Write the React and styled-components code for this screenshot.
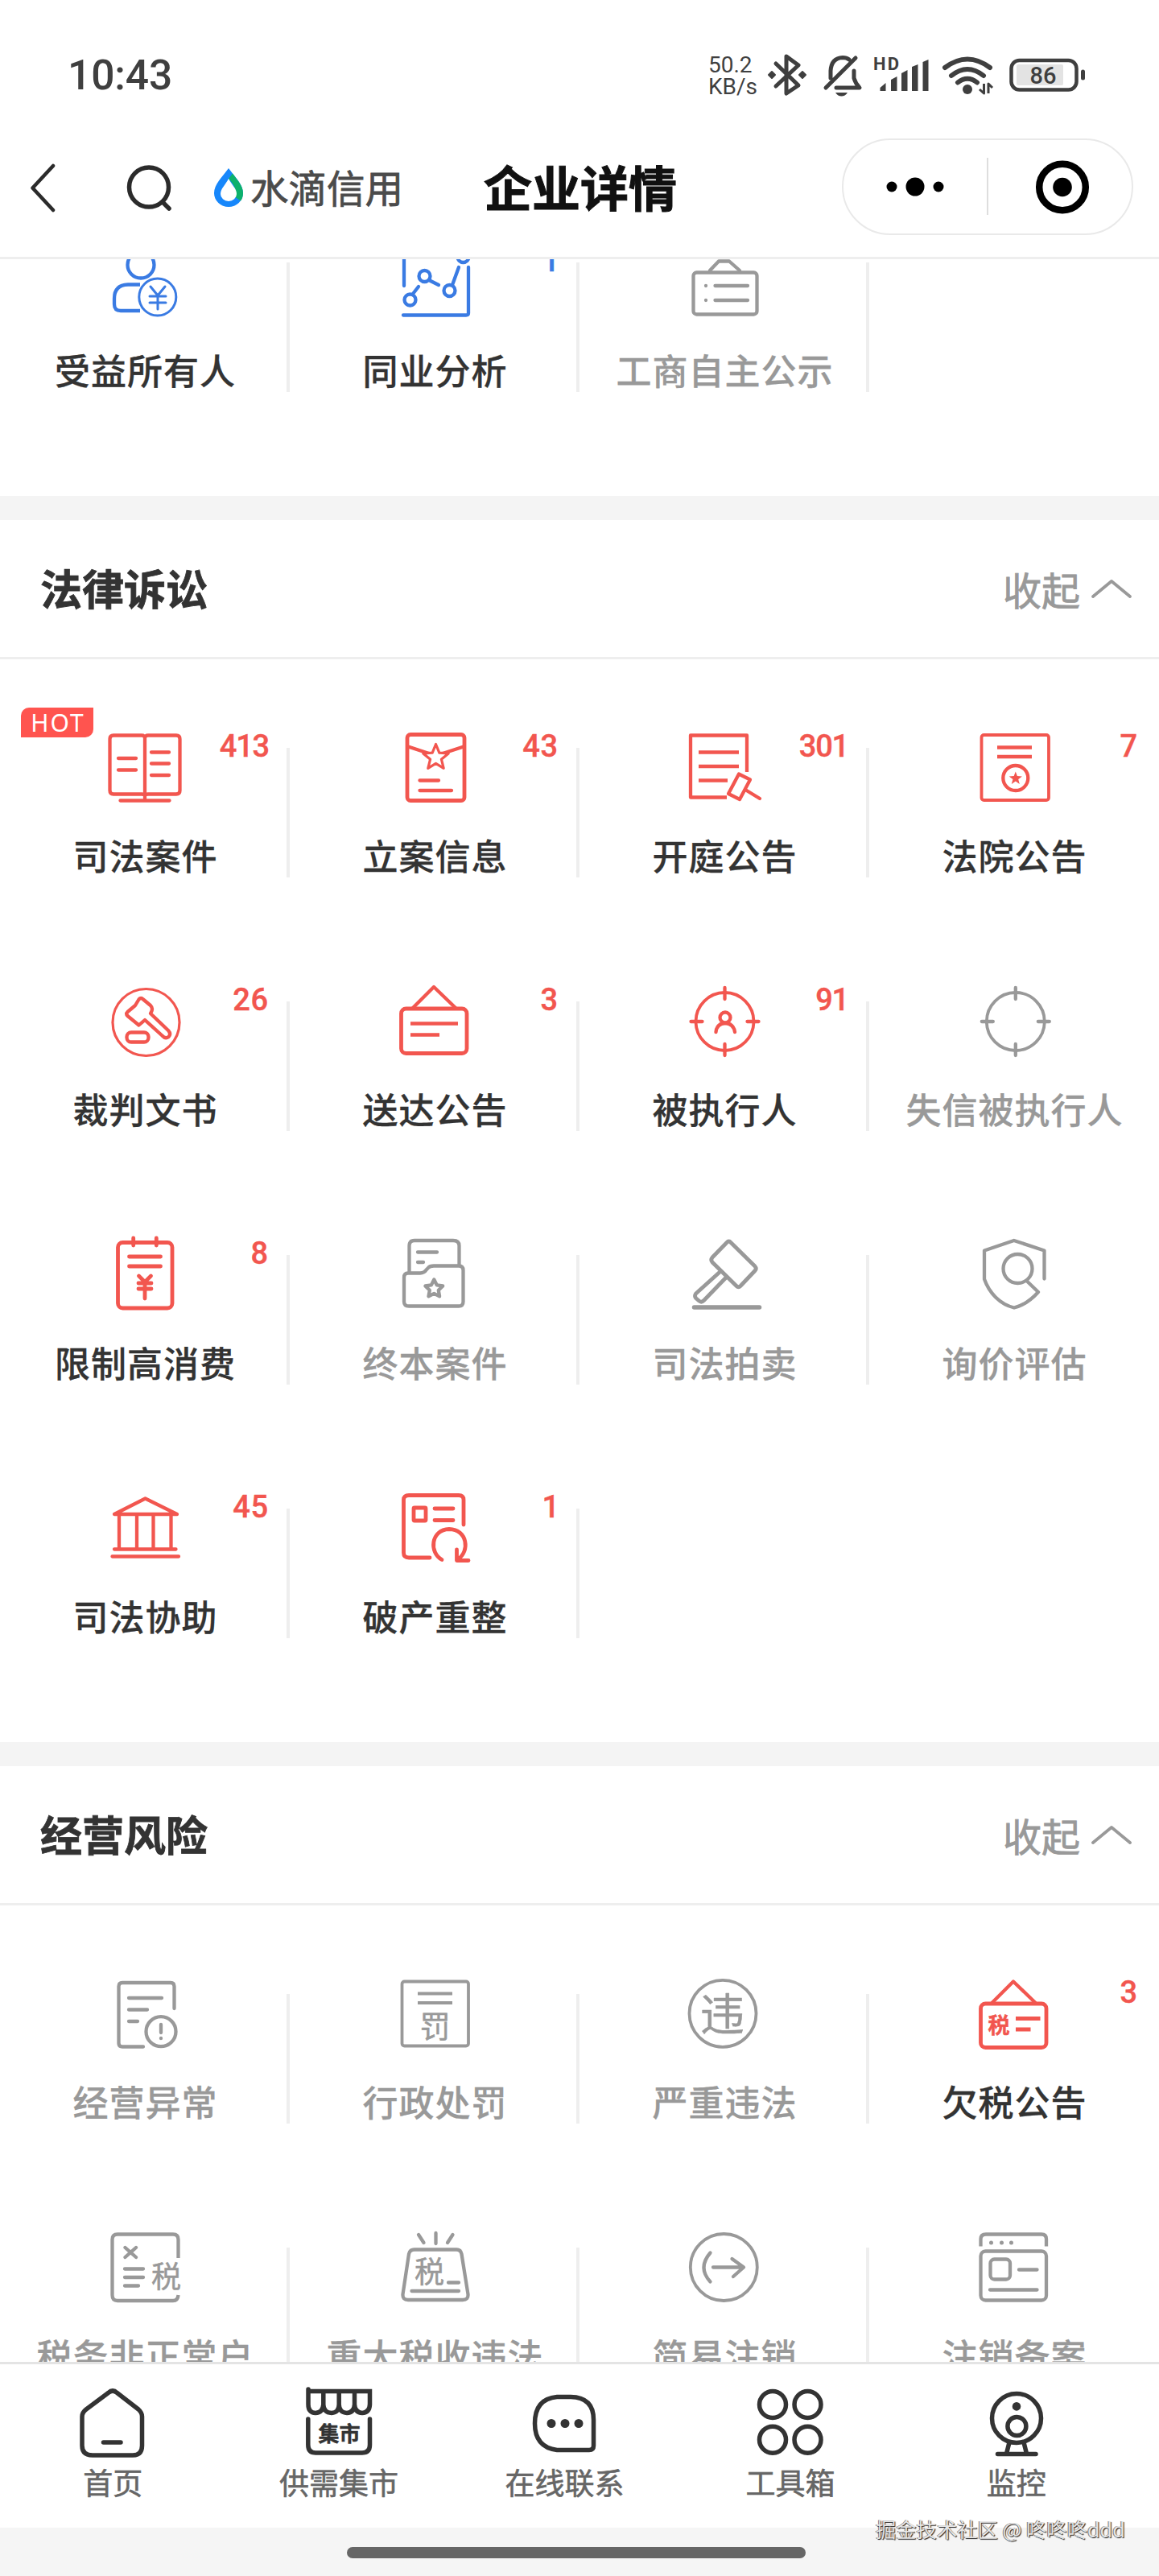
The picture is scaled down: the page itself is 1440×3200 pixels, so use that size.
import React from "react";
import styled, { createGlobalStyle } from "styled-components";

const RED = "#f2564f";
const BLUE = "#3a7be3";
const GREY = "#999999";
const INK = "#333333";
const CJK = `"Noto Sans CJK SC", sans-serif`;

const GlobalStyle = createGlobalStyle`
  * { box-sizing: border-box; }
  body { margin: 0; background: #fff; }
`;

const Page = styled.div`
  width: 1440px;
  height: 3200px;
  display: flex;
  flex-direction: column;
  background: #fff;
  color: ${INK};
  font-family: Roboto, ${CJK};
  overflow: hidden;
  position: relative;
`;

/* status bar */
const StatusBar = styled.div`
  height: 144px;
  flex: none;
  padding: 42px 90px 0 84px;
  display: flex;
  align-items: center;
  justify-content: space-between;
  color: #3f3f3f;
`;
const Clock = styled.div`
  padding-top: 1px;
  font-size: 51.5px;
  line-height: 60px;
  font-weight: 500;
  letter-spacing: -0.1px;
`;
const StatusIcons = styled.div`
  display: grid;
  grid-template-columns: 70px 68px 66px 84px 84px 98px;
  align-items: center;
`;
const Speed = styled.div`
  padding-top: 2px;
  font-size: 28px;
  line-height: 27px;
  white-space: nowrap;
`;
const Glyph = styled.svg`
  display: block;
  width: ${(p) => p.$w}px;
  height: ${(p) => p.$h}px;
  fill: none;
  stroke: currentColor;
  stroke-width: ${(p) => p.$stroke || 4.3};
  stroke-linecap: round;
  stroke-linejoin: round;
  overflow: visible;
`;

/* navigation bar */
const NavBar = styled.header`
  height: 178px;
  flex: none;
  border-bottom: 3px solid #eeeeee;
  display: grid;
  grid-template-columns: 140px 118px 325px 1fr 394px;
  align-items: center;
`;
const NavSlot = styled.div`
  padding-left: ${(p) => p.$left}px;
  padding-top: 2px;
  color: #2b2b2b;
`;
const Brand = styled.div`
  display: flex;
  align-items: center;
  gap: 7px;
  padding: 0 0 0 6px;
  font: 400 47.5px/60px ${CJK};
  color: #4b4b4b;
  white-space: nowrap;
  -webkit-text-stroke: 0.8px currentColor;
`;
const NavTitle = styled.h1`
  margin: 0;
  padding: 0 0 2px 18px;
  font: 700 60px/76px ${CJK};
  color: #111;
  white-space: nowrap;
  -webkit-text-stroke: 1px currentColor;
`;
const Capsule = styled.div`
  width: 362px;
  height: 120px;
  border: 2px solid #e9e9e9;
  border-radius: 60px;
  display: flex;
  align-items: center;
  color: #000;
`;
const CapsuleHalf = styled.div`
  flex: 1;
  display: flex;
  justify-content: center;
`;
const CapsuleRule = styled.div`
  width: 2px;
  height: 71px;
  background: #dedede;
`;

/* sections */
const Scroller = styled.main`
  flex: 1;
  min-height: 0;
  overflow: hidden;
`;
const Section = styled.section`
  margin-top: ${(p) => p.$pull || 0}px;
  padding-bottom: 87px;
`;
const Band = styled.div`
  height: 30px;
  background: #f4f4f4;
`;
const SectionHead = styled.div`
  height: 173px;
  border-bottom: 3px solid #eeeeee;
  padding: 0 34px 2px 50px;
  display: flex;
  align-items: center;
  justify-content: space-between;
`;
const SectionTitle = styled.h2`
  margin: 0;
  font: 700 52px/70px ${CJK};
  -webkit-text-stroke: 0.8px currentColor;
`;
const Toggle = styled.div`
  display: flex;
  align-items: center;
  gap: 14px;
  padding-top: 1px;
  font: 400 48px/70px ${CJK};
  color: ${GREY};
  -webkit-text-stroke: 0.8px currentColor;
`;
const Grid = styled.div`
  margin-top: -2px;
  display: grid;
  grid-template-columns: repeat(4, 360px);
  grid-auto-rows: 315px;
`;
const Cell = styled.div`
  position: relative;
  display: flex;
  align-items: flex-start;
`;
const CellBody = styled.div`
  flex: none;
  width: 360px;
  padding-top: 87px;
  display: flex;
  flex-direction: column;
  align-items: center;
  color: ${(p) => p.$color};
`;
const CellRule = styled.div`
  flex: none;
  width: 4px;
  height: 161px;
  margin: 112px 0 0 -4px;
  background: #eeeeee;
`;
const CellLabel = styled.div`
  margin-top: 27px;
  padding-left: 1px;
  font: 500 44px/62px ${CJK};
  letter-spacing: 1px;
  white-space: nowrap;
  color: ${(p) => (p.$muted ? GREY : INK)};
  -webkit-text-stroke: 0.3px currentColor;
`;
const Count = styled.span`
  position: absolute;
  top: 88px;
  right: ${(p) => (p.$narrow ? 26 : 26)}px;
  font: 500 38px/44px Roboto, sans-serif;
  letter-spacing: ${(p) => (p.$narrow ? -1.2 : 0.8)}px;
  color: ${(p) => p.$color};
  -webkit-text-stroke: 0.4px currentColor;
`;
const Hot = styled.span`
  position: absolute;
  left: 26px;
  top: 62px;
  width: 90px;
  height: 37px;
  border-radius: 10px 0 10px 0;
  background: #ff544f;
  color: #fff;
  font: 400 30px/37px "Noto Sans", sans-serif;
  letter-spacing: 2px;
  text-align: center;
  padding-left: 2px;
`;

/* bottom bar */
const TabBar = styled.nav`
  height: 206px;
  flex: none;
  border-top: 3px solid #e4e4e4;
  padding-right: 37px;
  display: grid;
  grid-template-columns: repeat(5, 1fr);
`;
const Tab = styled.div`
  padding-top: 23px;
  display: flex;
  flex-direction: column;
  align-items: center;
  color: ${INK};
`;
const TabLabel = styled.div`
  font: 400 37px/46px ${CJK};
  color: #666;
  -webkit-text-stroke: 0.6px currentColor;
`;
const GestureArea = styled.div`
  height: 60px;
  flex: none;
  background: #f5f5f5;
  display: flex;
  justify-content: center;
  padding: 24px 8px 0 0;
`;
const GestureBar = styled.div`
  width: 570px;
  height: 14px;
  border-radius: 7px;
  background: #666;
`;
const Watermark = styled.div`
  position: absolute;
  right: 42px;
  top: 3123px;
  font: 400 25.3px/36px ${CJK};
  color: #e6e6e6;
  white-space: nowrap;
  text-shadow: 1px 1px 1px #222, -1px 0 0 #777;
`;

const starPath = (cx, cy, r, inner = 0.42) =>
  Array.from({ length: 10 }, (_, i) => {
    const a = -Math.PI / 2 + (i * Math.PI) / 5;
    const k = i % 2 ? r * inner : r;
    return `${i ? "L" : "M"}${(cx + k * Math.cos(a)).toFixed(1)} ${(cy + k * Math.sin(a)).toFixed(1)}`;
  }).join("") + "Z";

const SvgWord = styled.text`
  font-family: ${CJK};
  font-size: ${(p) => p.$size}px;
  font-weight: ${(p) => p.$weight || 400};
  fill: currentColor;
  stroke: currentColor;
  stroke-width: 0.5px;
`;

const Crosshair = ({ cx }) => (
  <>
    <circle cx={cx} cy="50" r="36" strokeWidth="3.800" />
    <path d={`M${cx} 8V22M${cx} 78V92M${cx - 42} 50H${cx - 28}M${cx + 28} 50H${cx + 42}`} />
  </>
);

const icons = {
  owner: (
    <>
      <circle cx="45" cy="28" r="16.5" />
      <path strokeLinecap="butt" d="M44 52.5H29Q12 53 12 70V77Q12 85 20 85H44" />
      <circle cx="65.800" cy="68" r="23" strokeWidth="3" />
      <path strokeWidth="3" d="M57 55L66 66L75 55M56 67H76M56 75H76M66 66V83" />
    </>
  ),
  analysis: (
    <>
      <path d="M12 10V54M92 31V88Q92 90.500 89 90.500H11" />
      <circle cx="19.500" cy="71.500" r="7" />
      <circle cx="37.500" cy="42" r="7" />
      <circle cx="68.500" cy="60" r="7" />
      <circle cx="85.500" cy="18" r="7" />
      <path d="M23 64L30 55M43 47L55 53M72 53L80 31" />
    </>
  ),
  notice: (
    <>
      <path d="M32 35L43 23.500H56L69 35" />
      <rect x="11.500" y="37.500" width="79" height="52" rx="4" />
      <path d="M27 54V54.100M38.500 54H79M27 72V72.100M38.500 72H79" />
    </>
  ),
  book: (
    <>
      <path d="M50 13Q50 9.500 46 9.500H11Q6.500 9.500 6.500 14V78Q6.500 82.500 11 82.500H46Q50 82.500 50 85M50 13Q50 9.500 54 9.500H89Q93.500 9.500 93.500 14V78Q93.500 82.500 89 82.500H54Q50 82.500 50 85M50 13V90M19.500 90.500H80.500" />
      <path d="M17 38H39M17 52.500H39M58 30.500H80M58 44.500H80M58 59H80" />
    </>
  ),
  filing: (
    <>
      <rect x="16" y="8.500" width="71" height="82" rx="4" strokeWidth="4.800" />
      <path d="M17 23.500L43 32M86 23.500L60 32M31.500 65.500H55M31.500 78H71" />
      <path strokeWidth="3.200" fill="#fff" d={starPath(51.500, 37, 16.500, 0.44)} />
    </>
  ),
  hearing: (
    <>
      <path strokeLinecap="butt" d="M78 55V9.500H8V86.500H53" />
      <path strokeLinecap="butt" d="M18 30.500H68M18 48H68M18 65.500H54" />
      <path d="M68 57.500L82 64.500L69 89L55 82ZM76 77L94 88" />
    </>
  ),
  court: (
    <>
      <rect x="9.500" y="9" width="83.500" height="81" rx="3" strokeWidth="3.800" />
      <path strokeLinecap="butt" d="M29 24.500H72M29 36H72" />
      <circle cx="51.800" cy="62.500" r="15.500" />
      <path fill="currentColor" stroke="none" d={starPath(51.800, 63, 8.500)} />
    </>
  ),
  judgment: (
    <>
      <circle cx="51.500" cy="51" r="41.500" strokeWidth="3.200" />
      <path d="M42.500 22.500Q45 19.500 48 22.500L57 30Q60 33 58.500 37L57 40L79 61Q83 65.500 79.500 69Q75.500 72 71.500 67.500L50 48L42.500 54.500L28.500 43Q26 40.500 28.500 38L38 30Z" />
      <rect x="27.500" y="63.500" width="27" height="12" rx="5.500" />
    </>
  ),
  board: (
    <>
      <path d="M23 33L49 7L76 33" />
      <rect x="8.500" y="34" width="81.500" height="55.500" rx="6" strokeWidth="4.800" />
      <path strokeLinecap="butt" strokeWidth="4.500" d="M20 52.500H79M20 66.500H56" />
    </>
  ),
  executed: (
    <>
      <Crosshair cx={50.500} />
      <circle cx="51" cy="45" r="6.500" />
      <path d="M39.500 63Q40.500 52.500 51 52Q61.500 52.500 63 63" />
    </>
  ),
  dishonest: <Crosshair cx={51.800} />,
  limit: (
    <>
      <rect x="16.500" y="9.500" width="67.500" height="81.500" rx="6" strokeWidth="4.800" />
      <path strokeWidth="4.800" d="M35.700 4V13M64.300 4V13M30.500 27H69.500M30.500 39H69.500M42.500 51L50 58.500L57.500 51M42 60H58M42 67H58M50 59V79" />
    </>
  ),
  closed: (
    <>
      <path strokeLinecap="butt" d="M18.500 46V13.500Q18.500 7 25 7H73Q80.500 7 80.500 13.500V38" />
      <path d="M29 21.500H53M29 34H36" />
      <path d="M17 47.500H32Q37 47.500 40 43L42 41Q44 38.500 49 38.500H80Q85.500 38.500 85.500 44V83Q85.500 88.500 80 88.500H18Q12 88.500 12 83V53Q12 47.500 17 47.500Z" />
      <path d={starPath(49.300, 67, 11.500, 0.5)} />
    </>
  ),
  auction: (
    <>
      <path strokeWidth="4.800" d="M53 9.500Q55.500 6.500 58 9.500L88 39Q90.500 41.800 88 44.500L70 63.500Q67.500 66 65 63.500L35 34Q32.500 31 35 28Z" />
      <path strokeWidth="4.800" d="M45 45.500L14.500 73Q12.500 76 14.500 78.500L18.500 82Q21.500 84.500 24.500 81.500L53 52" />
      <path strokeWidth="5.500" d="M12.500 90H93.500" />
    </>
  ),
  evaluate: (
    <>
      <path d="M87.500 54.500V19.500L49.800 7L13 19.500V55C19 72 32 86 50 90.500C62 87.500 72 80 80 71L67 58.500" />
      <circle cx="54.500" cy="42" r="18" />
    </>
  ),
  bank: (
    <>
      <path d="M12 32L50.500 12.500L90 32Z" />
      <path d="M18 33V75M40 33V75M60.500 33V75M82.500 33V75M12 75.500H88.500M9.500 84.500H92" />
    </>
  ),
  restructure: (
    <>
      <path strokeWidth="4.800" d="M86 45V14Q86 8.500 80 8.500H18Q11.500 8.500 11.500 14V80Q11.500 86 18 86H44" />
      <rect x="24" y="24" width="15" height="16" rx="1" strokeWidth="4.800" />
      <path strokeWidth="4.800" d="M50 25H73M50 39.500H73M59 88.500C43 80 45 51 68 50.500C91 51 94 78 79 88M77.500 76V89.500H92" />
    </>
  ),
  abnormal: (
    <>
      <path d="M86.500 43V15.500Q86.500 11 82 11H22Q17.500 11 17.500 15.500V86Q17.500 90.500 22 90.500H48" />
      <path d="M30 30H71M30 44.500H53M30 59H41" />
      <circle cx="70" cy="71.700" r="18.500" />
      <path d="M70 63V73M70 80V80.200" />
    </>
  ),
  penalty: (
    <>
      <rect x="9.500" y="9.500" width="82.500" height="80" rx="3" strokeWidth="3.800" />
      <path strokeWidth="3.800" strokeLinecap="butt" d="M29 24.500H72M29 36H72" />
      <SvgWord x="50.500" y="79" $size={38} textAnchor="middle">罚</SvgWord>
    </>
  ),
  illegal: (
    <>
      <circle cx="48" cy="49.300" r="41.500" strokeWidth="3.800" />
      <SvgWord x="47.500" y="69.500" $size={55} textAnchor="middle">违</SvgWord>
    </>
  ),
  arrears: (
    <>
      <path d="M23 35.500L49 9.500L76 35.500" />
      <rect x="8.500" y="37" width="81.500" height="54.500" rx="6" strokeWidth="4.800" />
      <SvgWord x="31" y="74" $size={27} $weight={700} textAnchor="middle">税</SvgWord>
      <path strokeLinecap="butt" strokeWidth="4.800" d="M52 55.500H82.500M52 69H70.500" />
    </>
  ),
  taxAbnormal: (
    <>
      <path strokeLinecap="butt" d="M91.500 38V15Q91.500 8.500 85 8.500H16Q9.500 8.500 9.500 15V84Q9.500 91 16 91H85Q91 91 91.500 84" />
      <path d="M25.500 25L39 37M39 25L25.500 37M25 51.500H48M25 62H48M25 72.500H42" />
      <SvgWord x="76.500" y="75" $size={37} textAnchor="middle">税</SvgWord>
    </>
  ),
  taxIllegal: (
    <>
      <path d="M30 9L36.500 19M51.500 7V20M72.500 9L66 19" />
      <path d="M25 27.500H77Q82.500 27.500 83.500 33L91.500 83Q92 90 85 90H17Q10 90 10.500 83L18 33Q19 27.500 25 27.500Z" />
      <SvgWord x="43.500" y="68.500" $size={37} textAnchor="middle">税</SvgWord>
      <path d="M67 68.500H80M21.500 79H80" />
    </>
  ),
  deregister: (
    <>
      <circle cx="49.300" cy="49.500" r="41.500" strokeWidth="3.800" />
      <path d="M32.500 31.500Q16.500 50 32.500 67.500M36 49.500H73M59.500 39L74 49.500L61 61" />
    </>
  ),
  record: (
    <>
      <path strokeLinecap="butt" d="M8.500 23.500V14.500Q8.500 8.500 15 8.500H84Q90 8.500 90 14.500V23.500" />
      <rect x="8.500" y="29.500" width="81.500" height="61" rx="6" />
      <path strokeWidth="5" d="M21.500 19V19.100M34.500 19V19.100M46.500 19V19.100" />
      <rect x="20.500" y="39.500" width="24.500" height="25" rx="5" />
      <path d="M56 52.500H78.500M20 77.500H78.500" />
    </>
  ),
};

const tabIcons = {
  home: (
    <>
      <path d="M44.500 12.500Q50 7.500 55.500 12.500L82 33Q86.500 37 86.500 42V78Q86.500 90 75 90H25Q12 90 12 78V42Q12 37 17 33Z" />
      <path d="M38.500 74H60" />
    </>
  ),
  market: (
    <>
      <path strokeLinejoin="miter" d="M12 10.500H88.500V27Q88 37 79 37.500Q70 37 69.500 27V11M69.500 27Q69 37 60 37.500Q50.500 37 50.200 27V11M50.200 27Q50 37 41 37.500Q31 37 30.800 27V11M30.800 27Q30 37 21 37.500Q12 37 12 27V8" />
      <path d="M11.800 45V77Q11.800 87 21 87H79Q88.500 87 88.500 77V45" />
      <SvgWord x="50.500" y="72.500" $size={26} $weight={700} textAnchor="middle">集市</SvgWord>
    </>
  ),
  chat: (
    <>
      <path d="M41 17.500H58Q86.500 18 86.500 46V78Q86.500 83.500 81 83.500H41Q13.500 80 13.500 50.500Q13.500 20 41 17.500Z" />
      <path strokeWidth="11" d="M34 50.500V50.600M51 50.500V50.600M68 50.500V50.600" />
    </>
  ),
  tools: (
    <>
      <circle cx="28" cy="27" r="16.500" />
      <circle cx="71.500" cy="27" r="16.500" />
      <circle cx="28" cy="70.700" r="16.500" />
      <circle cx="71.500" cy="70.700" r="16.500" />
    </>
  ),
  monitor: (
    <>
      <circle cx="50" cy="44" r="30.500" />
      <path strokeWidth="10.500" d="M50 29.300V29.400" />
      <circle cx="50.400" cy="54" r="11.500" />
      <path d="M40.500 76L38 86M59.500 76L62 86M26.500 88.500H74" />
    </>
  ),
};

const overview = [
  { label: "受益所有人", icon: "owner", color: BLUE },
  { label: "同业分析", icon: "analysis", color: BLUE, count: 1 },
  { label: "工商自主公示", icon: "notice", muted: true },
];

const litigation = [
  { label: "司法案件", icon: "book", count: 413, hot: true },
  { label: "立案信息", icon: "filing", count: 43 },
  { label: "开庭公告", icon: "hearing", count: 301 },
  { label: "法院公告", icon: "court", count: 7 },
  { label: "裁判文书", icon: "judgment", count: 26 },
  { label: "送达公告", icon: "board", count: 3 },
  { label: "被执行人", icon: "executed", count: 91 },
  { label: "失信被执行人", icon: "dishonest", muted: true },
  { label: "限制高消费", icon: "limit", count: 8 },
  { label: "终本案件", icon: "closed", muted: true },
  { label: "司法拍卖", icon: "auction", muted: true },
  { label: "询价评估", icon: "evaluate", muted: true },
  { label: "司法协助", icon: "bank", count: 45 },
  { label: "破产重整", icon: "restructure", count: 1 },
];

const risks = [
  { label: "经营异常", icon: "abnormal", muted: true },
  { label: "行政处罚", icon: "penalty", muted: true },
  { label: "严重违法", icon: "illegal", muted: true },
  { label: "欠税公告", icon: "arrears", count: 3 },
  { label: "税务非正常户", icon: "taxAbnormal", muted: true },
  { label: "重大税收违法", icon: "taxIllegal", muted: true },
  { label: "简易注销", icon: "deregister", muted: true },
  { label: "注销备案", icon: "record", muted: true },
];

const tabs = [
  { label: "首页", icon: "home" },
  { label: "供需集市", icon: "market" },
  { label: "在线联系", icon: "chat" },
  { label: "工具箱", icon: "tools" },
  { label: "监控", icon: "monitor" },
];

function ItemGrid({ items }) {
  return (
    <Grid>
      {items.map(({ label, icon, color = RED, count, muted, hot }, i) => (
        <Cell key={label}>
          <CellBody $color={muted ? GREY : color}>
            <Glyph $w={100} $h={100} viewBox="0 0 100 100">{icons[icon]}</Glyph>
            <CellLabel $muted={muted}>{label}</CellLabel>
          </CellBody>
          {i % 4 !== 3 && <CellRule />}
          {hot && <Hot>HOT</Hot>}
          {count && (
            <Count $color={color} $narrow={String(count).includes("1")}>{count}</Count>
          )}
        </Cell>
      ))}
    </Grid>
  );
}

function FoldableSection({ title, items }) {
  return (
    <Section>
      <SectionHead>
        <SectionTitle>{title}</SectionTitle>
        <Toggle>
          收起
          <Glyph $w={50} $h={24} $stroke={3.8} viewBox="0 0 50 24"><path d="M2 22L25 3L48 22" /></Glyph>
        </Toggle>
      </SectionHead>
      <ItemGrid items={items} />
    </Section>
  );
}

const BatteryText = styled.text`
  font: 500 29px Roboto, sans-serif;
  fill: currentColor;
  stroke: none;
`;
const HdText = styled.text`
  font: 700 22px Roboto, sans-serif;
  fill: currentColor;
  stroke: none;
`;

function Status() {
  return (
    <StatusBar>
      <Clock>10:43</Clock>
      <StatusIcons>
        <Speed>50.2<br />KB/s</Speed>
        <Glyph $w={56} $h={60} $stroke={5} viewBox="0 0 56 60">
          <path d="M14 16L42 43L27 53V7L42 18L14 44" />
          <path fill="currentColor" strokeWidth="2" d="M5 30L9 26L13 30L9 34ZM43 30L47 26L51 30L47 34Z" />
        </Glyph>
        <Glyph $w={56} $h={60} $stroke={5} viewBox="0 0 56 60">
          <path d="M45 9L8 46M14 34V25Q15 9 29 8.500Q34 8.500 37 11M43 25V34Q45 41 50 46H21" />
          <path fill="currentColor" stroke="none" d="M20 52H35Q32 56.500 27.500 56.500Q23 56.500 20 52Z" />
        </Glyph>
        <Glyph $w={74} $h={60} $stroke={6.500} viewBox="0 0 74 60">
          <HdText x="1" y="24" textLength="32">HD</HdText>
          <path fill="currentColor" stroke="none" d="M9.500 46L16.500 40V50H9.500ZM23 36L30.500 32V50H23ZM36 28L43.500 24V50H36ZM49 20L56.500 17V50H49ZM62.500 14L69.500 11V50H62.500Z" />
        </Glyph>
        <Glyph $w={68} $h={60} $stroke={6} viewBox="0 0 68 60">
          <path d="M6 21Q34 0 62 21M14 31Q34 15 54 31M22 39.500Q34 30 46 39.500" />
          <circle cx="34" cy="48" r="6" fill="currentColor" stroke="none" />
          <path strokeWidth="3" strokeLinecap="butt" d="M54.500 41V53L49 48M60 53V41L65 46" />
        </Glyph>
        <Glyph $w={98} $h={60} $stroke={4.500} viewBox="0 0 98 60">
          <rect x="11" y="17" width="58" height="26" rx="2" fill="#e3e3e3" stroke="none" />
          <rect x="4.500" y="12" width="81" height="36.500" rx="10" />
          <path strokeWidth="5" d="M93.500 26V34" />
          <BatteryText x="44" y="41" textAnchor="middle">86</BatteryText>
        </Glyph>
      </StatusIcons>
    </StatusBar>
  );
}

function Navigation() {
  return (
    <NavBar>
      <NavSlot $left={36}>
        <Glyph $w={34} $h={62} $stroke={4.500} viewBox="0 0 34 62"><path d="M30 4L4.500 31.500L30 59" /></Glyph>
      </NavSlot>
      <NavSlot $left={15}>
        <Glyph $w={62} $h={62} $stroke={5.500} viewBox="0 0 62 62">
          <circle cx="30" cy="30.500" r="24.500" />
          <path d="M47 49L55 57" />
        </Glyph>
      </NavSlot>
      <Brand>
        <Glyph $w={40} $h={52} viewBox="0 0 40 52">
          <path fill="#1787fb" stroke="none" d="M20 3C12 14 2 23 2 34A18 17 0 0 0 38 34C38 23 28 14 20 3Z" />
          <path fill="#0db16b" stroke="none" d="M25 9.500C31 18 38 25 38 34C38 37.500 37 41 35 43.500L27 38C31 31 27 23 20 16Z" />
          <path fill="#fff" stroke="none" d="M20 16C16 24 10 28 10 35A10 9 0 0 0 30 35C30 28 24 24 20 16Z" />
        </Glyph>
        水滴信用
      </Brand>
      <NavTitle>企业详情</NavTitle>
      <Capsule>
        <CapsuleHalf>
          <Glyph $w={72} $h={26} viewBox="0 0 72 26">
            <g fill="currentColor" stroke="none">
              <circle cx="7" cy="13" r="6.500" />
              <circle cx="36" cy="13" r="11.500" />
              <circle cx="65" cy="13" r="6.500" />
            </g>
          </Glyph>
        </CapsuleHalf>
        <CapsuleRule />
        <CapsuleHalf>
          <Glyph $w={68} $h={68} $stroke={8.500} viewBox="0 0 68 68">
            <circle cx="37" cy="34.500" r="28.800" />
            <circle cx="37" cy="34.500" r="11.800" fill="currentColor" stroke="none" />
          </Glyph>
        </CapsuleHalf>
      </Capsule>
    </NavBar>
  );
}

export default function App() {
  return (
    <Page>
      <GlobalStyle />
      <Status />
      <Navigation />
      <Scroller>
        <Section $pull={-108}>
          <ItemGrid items={overview} />
        </Section>
        <Band />
        <FoldableSection title="法律诉讼" items={litigation} />
        <Band />
        <FoldableSection title="经营风险" items={risks} />
      </Scroller>
      <TabBar>
        {tabs.map(({ label, icon }) => (
          <Tab key={label}>
            <Glyph $w={100} $h={100} $stroke={5.500} viewBox="0 0 100 100">{tabIcons[icon]}</Glyph>
            <TabLabel>{label}</TabLabel>
          </Tab>
        ))}
      </TabBar>
      <GestureArea><GestureBar /></GestureArea>
      <Watermark>掘金技术社区 @ 咚咚咚ddd</Watermark>
    </Page>
  );
}
